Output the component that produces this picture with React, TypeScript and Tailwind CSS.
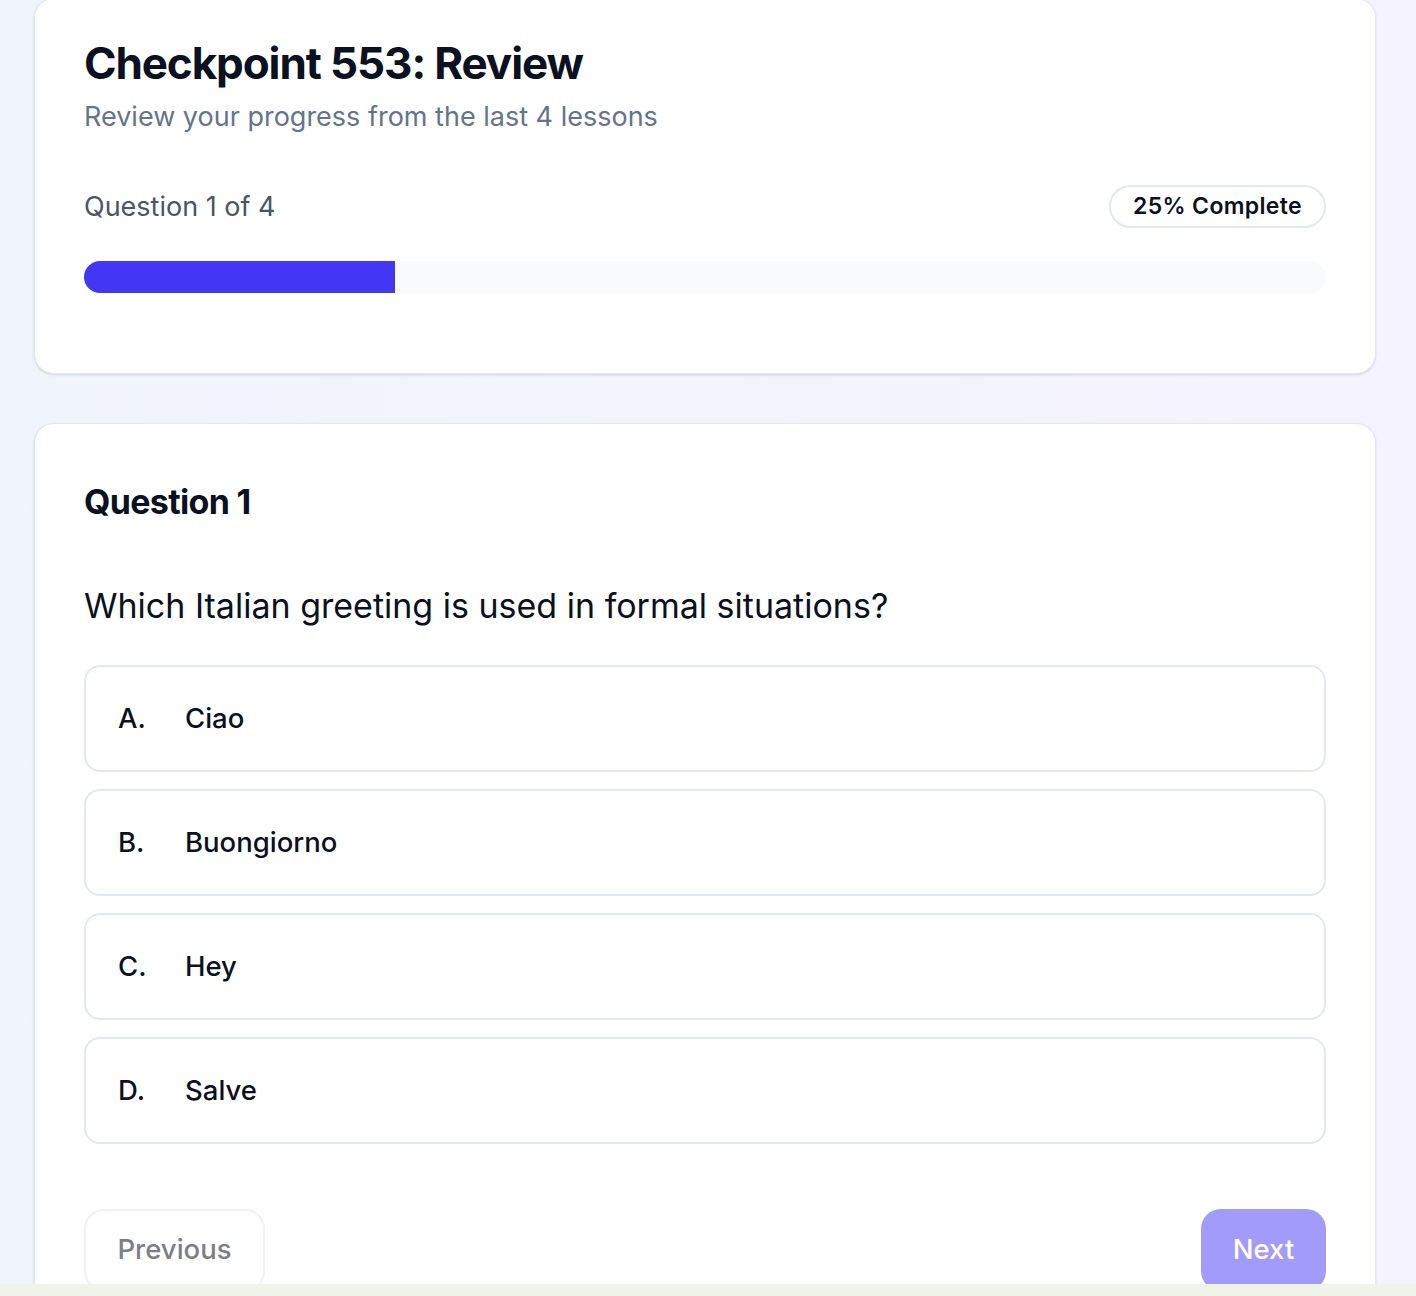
import React from "react";

const options = [
  { letter: "A.", text: "Ciao" },
  { letter: "B.", text: "Buongiorno" },
  { letter: "C.", text: "Hey" },
  { letter: "D.", text: "Salve" },
];

export default function App() {
  return (
    <div
      className="min-h-[1296px] w-full bg-gradient-to-r from-[#f0f4fd] to-[#f5f3ff] text-[#0b1120]"
      style={{ fontFamily: "Inter, 'Noto Sans', sans-serif" }}
    >
      <div className="pl-[34px] pr-[40px] flex flex-col gap-[49px]">
        {/* Header card */}
        <div className="-mt-[2px] bg-white border border-[#e2e8f0] rounded-[20px] shadow-sm px-[49px] pt-[40px] pb-[80px]">
          <h1 className="text-[44px] leading-[48px] font-bold tracking-[-0.025em] text-[#0b1120]">
            Checkpoint 553: Review
          </h1>
          <p className="mt-[14px] text-[27px] leading-[32px] text-[#64748b]">
            Review your progress from the last 4 lessons
          </p>
          <div className="mt-[52px] flex items-center justify-between">
            <span className="text-[27px] leading-[32px] text-[#4b5563]">Question 1 of 4</span>
            <span className="rounded-full border-2 border-[#e2e8f0] px-[22px] h-[43px] flex items-center text-[23px] font-semibold tracking-[0.015em] text-[#0b1120]">
              25% Complete
            </span>
          </div>
          <div className="mt-[33px] h-[32px] w-full rounded-full bg-[#f8fafc] overflow-hidden">
            <div className="h-full bg-[#4337f5]" style={{ width: "25%" }} />
          </div>
        </div>

        {/* Question card */}
        <div className="bg-white border border-[#e2e8f0] rounded-[20px] shadow-sm px-[49px] pt-[58px] pb-[40px]">
          <h2 className="text-[34px] leading-[40px] font-bold tracking-[-0.02em] text-[#0b1120]">Question 1</h2>
          <p className="mt-[64px] text-[34px] leading-[40px] text-[#0b1120]">
            Which Italian greeting is used in formal situations?
          </p>
          <div className="mt-[39px] flex flex-col gap-[17px]">
            {options.map((o) => (
              <div
                key={o.letter}
                className="h-[107px] border-2 border-[#e2e8f0] rounded-[16px] flex items-center px-[32px] text-[27.5px] font-medium text-[#0b1120]"
              >
                <span className="w-[67px]">{o.letter}</span>
                <span>{o.text}</span>
              </div>
            ))}
          </div>
          <div className="mt-[65px] flex items-center justify-between">
            <button className="h-[82px] w-[181px] rounded-[20px] border-2 border-[#f1f2f7] text-[27.5px] font-medium text-[#7c7f88]">
              Previous
            </button>
            <button className="h-[82px] w-[125px] rounded-[20px] bg-[#a29bf9] text-[27.5px] font-medium text-white">
              Next
            </button>
          </div>
        </div>
      </div>
      <div className="fixed bottom-0 left-0 right-0 h-[12px] bg-[#eff3e9]" />
    </div>
  );
}
